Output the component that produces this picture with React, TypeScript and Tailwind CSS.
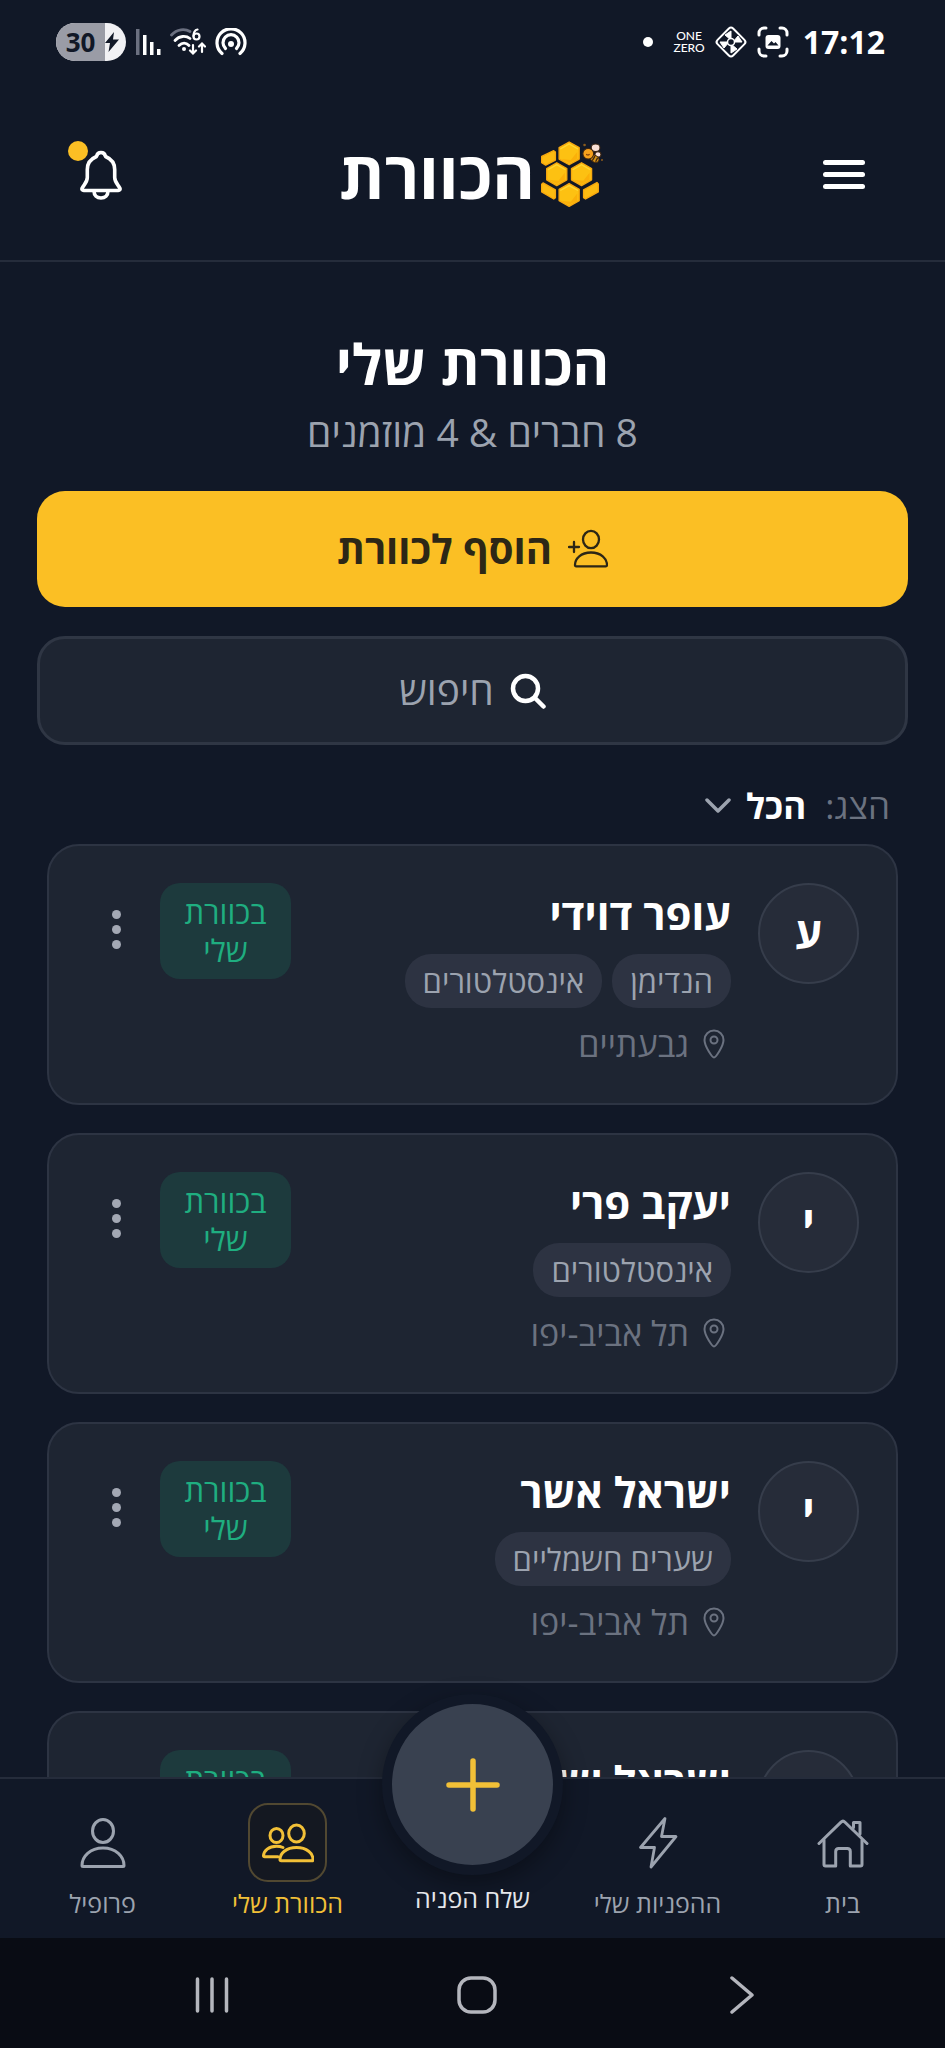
import React from 'react';

type Member = {
  id: number;
  name: string;
  initial: string;
  tags: string[];
  city?: string;
};

const members: Member[] = [
  { id: 1, name: 'עופר דוידי', initial: 'ע', tags: ['הנדימן', 'אינסטלטורים'], city: 'גבעתיים' },
  { id: 2, name: 'יעקב פרי', initial: 'י', tags: ['אינסטלטורים'], city: 'תל אביב-יפו' },
  { id: 3, name: 'ישראל אשר', initial: 'י', tags: ['שערים חשמליים'], city: 'תל אביב-יפו' },
  { id: 4, name: 'ישראל יש', initial: 'י', tags: [] },
];

const Hex = ({ x, y }: { x: number; y: number }) => (
  <g transform={`translate(${x} ${y})`}>
    <path d="M0 -34 L30 -17 V17 L0 34 L-30 17 V-17 Z" fill="#fdc112" stroke="#f7a80f" strokeWidth="4" strokeLinejoin="round" />
    <path d="M-25 -14 L0 -28 L25 -14" fill="none" stroke="#fdd835" strokeWidth="4" strokeLinecap="round" />
    <path d="M-24 17 L0 29 L24 17 V-4 L5 20 Z" fill="#fbb00a" />
  </g>
);

const HiveLogo = () => (
  <svg viewBox="660 38 200 200" className="size-[67px]" aria-hidden="true">
    <Hex x={750} y={78} />
    <Hex x={713} y={140} />
    <Hex x={787} y={140} />
    <Hex x={750} y={202} />
    <g fill="#fdbb11" stroke="#f7a80f" strokeWidth="4" strokeLinejoin="round">
      <path d="M668 87 L704 70 L709 74 V98 L680 113 L668 106 Z" />
      <path d="M672 166 L709 187 V210 L704 214 L668 193 V170 Z" />
      <path d="M793 187 L833 165 L837 169 V193 L799 214 L793 210 Z" />
    </g>
    <g stroke="#3b2412" strokeWidth="3">
      <ellipse cx="829" cy="61" rx="13" ry="11" fill="#f8dfd6" />
      <ellipse cx="836" cy="81" rx="9" ry="8" fill="#f8dfd6" />
      <ellipse cx="826" cy="94" rx="14" ry="10" fill="#d99413" transform="rotate(30 826 94)" />
      <circle cx="807" cy="79" r="16" fill="#f5a01d" />
      <path d="M819 100 L827 86 M829 103 L835 91" strokeWidth="4" />
    </g>
    <path d="M801 80 q5 6 10 0" fill="none" stroke="#7a3b0a" strokeWidth="3" />
    <circle cx="796" cy="53" r="4" fill="#8a5a1c" />
    <circle cx="848" cy="98" r="3" fill="#8a5a1c" />
  </svg>
);

const BellIcon = () => (
  <svg viewBox="0 0 42 50" className="h-[50px] w-[42px]" fill="none" stroke="currentColor" strokeWidth="3.6" strokeLinejoin="round" strokeLinecap="round">
    <path d="M21 2.5c-2.600 0-4 1.500-4.500 4C10.500 9 7.300 13.500 7.300 19.500v8c0 5-3.800 7.500-5.200 10.700-.5 1.300.2 2.300 1.600 2.300h34.600c1.400 0 2.100-1 1.600-2.300-1.400-3.200-5.200-5.700-5.200-10.700v-8c0-6-3.200-10.500-9.200-13-.5-2.500-1.900-4-4.500-4z" />
    <path d="M14 41c0 4.500 3 7 7 7s7-2.500 7-7" />
  </svg>
);

const UserIcon = () => (
  <svg viewBox="0 0 46 50" className="h-[50px] w-[46px]" fill="none" stroke="currentColor" strokeWidth="3" strokeLinejoin="round">
    <ellipse cx="23" cy="13" rx="10.500" ry="11.500" />
    <path d="M2 47.500c0-9 8-17.500 21-17.500s21 8.500 21 17.500c0 .6-.4 1-1 1H3c-.6 0-1-.4-1-1z" />
  </svg>
);

const GroupIcon = () => (
  <svg viewBox="0 0 52 40" className="h-[40px] w-[52px]" fill="none" stroke="currentColor" strokeWidth="3" strokeLinejoin="round" strokeLinecap="round">
    <ellipse cx="34.500" cy="10.500" rx="7.800" ry="8.500" />
    <ellipse cx="14.500" cy="12.500" rx="6.500" ry="7" />
    <path d="M18 36.500c0-6 6-12 16.500-12S51 30.500 51 36.500c0 .8-.4 1.300-1.200 1.300H19.200c-.8 0-1.200-.5-1.200-1.300z" />
    <path d="M21 24.500c-2-.9-4-1.300-6.500-1.300C6.500 23.200 2 28 1.500 32.500c0 .8.4 1.300 1.200 1.300H16" />
  </svg>
);

const BoltIcon = () => (
  <svg viewBox="0 0 40 54" className="h-[54px] w-[40px]" fill="none" stroke="currentColor" strokeWidth="2.800" strokeLinejoin="round">
    <path d="M27 2.500 2.500 31.500h14L13 51 38 20.500H23.500z" />
  </svg>
);

const HomeIcon = () => (
  <svg viewBox="0 0 52 50" className="h-[50px] w-[52px]" fill="none" stroke="currentColor" strokeWidth="3" strokeLinejoin="round" strokeLinecap="round">
    <path d="M2 25.500 24 4.200c1.200-1.200 2.800-1.200 4 0L50 25.500" />
    <path d="M7 22v24.500c0 1 .6 1.500 1.500 1.500h10.200V33.500c0-2 1-3 3-3h8.600c2 0 3 1 3 3V48h10.200c.9 0 1.500-.5 1.500-1.500V22" />
    <path d="M36.500 9.500V4.500h6.500v11.500" />
  </svg>
);

const AddUserIcon = () => (
  <svg viewBox="0 0 40 40" className="size-[40px]" fill="none" stroke="currentColor" strokeWidth="2.300" strokeLinejoin="round" strokeLinecap="round">
    <ellipse cx="23" cy="10.500" rx="8" ry="8.700" />
    <path d="M7 36c0-6.500 6-12.500 16-12.500S39 29.500 39 36c0 .8-.4 1.300-1.200 1.300H8.200C7.400 37.300 7 36.800 7 36z" />
    <path d="M1 18h10M6 13v10" />
  </svg>
);

const PinIcon = () => (
  <svg viewBox="0 0 22 30" className="h-[30px] w-[22px]" fill="none" stroke="currentColor" strokeWidth="2" strokeLinejoin="round">
    <path d="M11 28.500C9.500 28.500 1.500 17.500 1.500 11a9.500 9.500 0 0 1 19 0c0 6.500-8 17.500-9.500 17.500z" />
    <circle cx="11" cy="11" r="3.500" />
  </svg>
);

const StatusBar = () => (
  <div dir="ltr" className="flex h-[84px] items-center justify-between pr-[60px] pl-[56px] text-white">
    <div className="flex items-center">
      <div className="flex h-[38px] w-[70px] items-center overflow-hidden rounded-full bg-[#f1f1f4] text-[#111827]">
        <span className="flex h-full w-[49px] items-center justify-center bg-[#9a9ca6] text-[26px] font-bold">30</span>
        <svg viewBox="0 0 14 20" className="h-[20px] w-[14px]" fill="currentColor">
          <path d="M9 0 0 11h5L3.500 20 14 7.500H8z" />
        </svg>
      </div>
      <svg viewBox="0 0 26 26" className="ml-[10px] h-[26px] w-[26px]" fill="currentColor">
        <rect width="3.500" height="26" fill="#6b7080" />
        <rect x="7" y="6" width="3.500" height="20" />
        <rect x="14" y="13" width="3.500" height="13" />
        <rect x="21" y="20" width="3.500" height="6" />
      </svg>
      <svg viewBox="0 0 36 28" className="ml-[8px] h-[28px] w-[36px]" fill="none" stroke="currentColor" strokeWidth="2.800" strokeLinecap="round">
        <path d="M1.500 7C7 .8 15 .5 20 3.500" stroke="#6b7080" />
        <path d="M5 12.500c4.500-5 11-5 15-2M9 17.500c3.200-3.200 7-3.200 10 0" />
        <circle cx="14" cy="21" r="2" fill="currentColor" stroke="none" />
        <g strokeWidth="2.200">
          <circle cx="26.500" cy="8.500" r="3" />
          <path d="M23.500 8c0-3.500 1.500-6 4-6.500M23 17v8m-3-2.500 3 3 3-3M32 24v-8m-3 2.500 3-3 3 3" />
        </g>
      </svg>
      <svg viewBox="0 0 32 28" className="ml-[9px] h-[28px] w-[32px]" fill="none" stroke="currentColor" strokeWidth="3.200" strokeLinecap="round">
        <path d="M7 25.500a14 14 0 1 1 18 0" />
        <path d="M10.500 20.500a8 8 0 1 1 11 0" />
        <circle cx="16" cy="16" r="3" fill="currentColor" stroke="none" />
      </svg>
    </div>
    <div className="flex items-center">
      <span className="mr-[20px] size-[10px] rounded-full bg-white" />
      <span className="mr-[9px] text-center font-['Lato','Liberation_Sans',sans-serif] text-[12px] leading-[12px] font-medium">
        ONE
        <br />
        ZERO
      </span>
      <svg viewBox="0 0 34 34" className="mr-[9px] size-[34px]" fill="none" stroke="currentColor" strokeWidth="2">
        <rect x="6" y="6" width="22" height="22" rx="3" transform="rotate(45 17 17)" />
        <path d="M17 6v9l-6-5zM17 28v-9l6 5zM6 17h9l-5 6zM28 17h-9l5-6z" fill="currentColor" strokeWidth="1" />
        <circle cx="17" cy="17" r="3.500" fill="#111827" strokeWidth="1.500" />
      </svg>
      <svg viewBox="0 0 32 32" className="mr-[14px] size-[32px]" fill="none" stroke="currentColor" strokeWidth="3" strokeLinecap="round">
        <path d="M2 9V7a5 5 0 0 1 5-5h2M23 2h2a5 5 0 0 1 5 5v2M30 23v2a5 5 0 0 1-5 5h-2M9 30H7a5 5 0 0 1-5-5v-2" />
        <rect x="8.500" y="9" width="15" height="14" rx="3" fill="currentColor" stroke="none" />
        <path d="M10.500 19.500l4-4.500 2.500 2.500 1.500-1.500 3 3.500z" fill="#111827" stroke="none" />
      </svg>
      <span className="text-[32px] font-bold">17:12</span>
    </div>
  </div>
);

const Header = () => (
  <header className="flex h-[178px] shrink-0 items-center justify-between border-b-2 border-[#252c3b] px-[80px] pt-[5px] text-white">
    <button type="button" aria-label="תפריט" className="flex w-[42px] flex-col gap-[7px]">
      <span className="h-[5px] rounded-full bg-white" />
      <span className="h-[5px] rounded-full bg-white" />
      <span className="h-[5px] rounded-full bg-white" />
    </button>
    <div className="flex items-center gap-[4px] pb-[2px]">
      <HiveLogo />
      <span className="text-[65px] leading-[66px] font-bold">הכוורת</span>
    </div>
    <button type="button" aria-label="התראות" className="relative">
      <BellIcon />
      <span className="absolute -top-[9px] -left-[12px] size-[20px] rounded-full bg-[#fbbf24]" />
    </button>
  </header>
);

const MemberCard = ({ member }: { member: Member }) => (
  <article className="flex min-h-[260px] shrink-0 items-start rounded-[32px] border-2 border-[#2d3443] bg-[#1e2532] p-[37px]">
    <div className="flex size-[101px] shrink-0 items-center justify-center rounded-full border-2 border-[#363d4b] bg-[#262c39] text-[43px] font-bold text-white">
      {member.initial}
    </div>
    <div className="mr-[27px] flex-1">
      <h2 className="text-[42px] leading-[62px] font-bold text-white">{member.name}</h2>
      {member.tags.length > 0 && (
        <ul className="mt-[9px] flex gap-[10px]">
          {member.tags.map((tag) => (
            <li key={tag} className="rounded-[26px] bg-[#2d3342] px-[18px] text-[31px] leading-[54px] text-[#9ca3af]">
              {tag}
            </li>
          ))}
        </ul>
      )}
      {member.city && (
        <p className="mt-[14px] flex items-center gap-[14px] pr-[6px] text-[34px] leading-[44px] text-[#6b7280]">
          <PinIcon />
          {member.city}
        </p>
      )}
    </div>
    <span className="w-[131px] rounded-[20px] bg-[#1d3a3d] px-[16px] py-[10px] text-center text-[31px] leading-[38px] text-[#1fae80]">
      בכוורת שלי
    </span>
    <button type="button" aria-label="פעולות נוספות" className="mr-[14px] flex h-[92px] w-[60px] flex-col items-center justify-center gap-[6px]">
      <span className="size-[9px] rounded-full bg-[#a3a8b4]" />
      <span className="size-[9px] rounded-full bg-[#a3a8b4]" />
      <span className="size-[9px] rounded-full bg-[#a3a8b4]" />
    </button>
  </article>
);

const NavItem = ({ label, icon, active }: { label: string; icon: React.ReactNode; active?: boolean }) => (
  <a
    href="#"
    aria-current={active ? 'page' : undefined}
    className={`flex flex-col items-center gap-[3px] text-[25px] leading-[36px] ${active ? 'text-[#f2c037]' : 'text-[#9ca3af]'}`}
  >
    <span className={`flex size-[79px] items-center justify-center rounded-[20px] ${active ? 'border-2 border-[#514831] bg-[#141821]' : ''}`}>
      {icon}
    </span>
    {label}
  </a>
);

const BottomNav = () => (
  <nav className="relative z-10 grid h-[161px] shrink-0 grid-cols-5 border-t-2 border-[#252c3b] bg-[#111827] px-[10px] pt-[24px]">
    <NavItem label="בית" icon={<HomeIcon />} />
    <NavItem label="ההפניות שלי" icon={<BoltIcon />} />
    <button type="button" className="-mt-[109px] flex flex-col items-center gap-[5px] text-[25px] leading-[36px] text-[#e5e7eb]">
      <span className="flex size-[181px] shrink-0 items-center justify-center rounded-full border-10 border-[#111827] bg-[#394150] shadow-[0_8px_24px_rgba(0,0,0,0.35)]">
        <svg viewBox="0 0 54 54" className="size-[54px]" stroke="#f2c037" strokeWidth="5.500" strokeLinecap="round">
          <path d="M27 3v48M3 27h48" />
        </svg>
      </span>
      שלח הפניה
    </button>
    <NavItem label="הכוורת שלי" icon={<GroupIcon />} active />
    <NavItem label="פרופיל" icon={<UserIcon />} />
  </nav>
);

const SystemBar = () => (
  <div dir="ltr" className="flex h-[110px] shrink-0 items-center justify-between bg-[#090c14] px-[191px] pt-[4px] text-[#b4b6bd]">
    <button type="button" aria-label="Recents">
      <svg viewBox="0 0 40 36" className="h-[36px] w-[40px]" stroke="currentColor" strokeWidth="3.500" strokeLinecap="round">
        <path d="M6.500 2v32M21 2v32M35.500 2v32" />
      </svg>
    </button>
    <button type="button" aria-label="Home">
      <svg viewBox="0 0 40 38" className="h-[38px] w-[40px]" fill="none" stroke="currentColor" strokeWidth="3.500">
        <rect x="2" y="2" width="36" height="34" rx="12" />
      </svg>
    </button>
    <button type="button" aria-label="Back">
      <svg viewBox="-8 0 32 38" className="h-[38px] w-[32px]" fill="none" stroke="currentColor" strokeWidth="3.500" strokeLinecap="round" strokeLinejoin="round">
        <path d="M2 2 22 19 2 36" />
      </svg>
    </button>
  </div>
);

const App = () => {
  return (
    <div dir="rtl" className="flex h-screen flex-col bg-[#111827] font-['Open_Sans','Noto_Sans',sans-serif]">
      <StatusBar />
      <Header />

      <main className="min-h-0 flex-1 overflow-hidden pt-[64px]">
        <div className="px-[37px]">
          <h1 className="text-center text-[56px] leading-[74px] font-bold text-white">הכוורת שלי</h1>
          <p className="mt-[4px] text-center text-[39px] leading-[56px] text-[#9ca3af]">8 חברים &amp; 4 מוזמנים</p>

          <button type="button" className="mt-[31px] flex h-[116px] w-full items-center justify-center gap-[16px] rounded-[28px] bg-[#fbbf24] text-[40px] font-bold text-[#2c2716]">
            <AddUserIcon />
            הוסף לכוורת
          </button>

          <label className="mt-[29px] flex h-[109px] items-center justify-center gap-[16px] rounded-[28px] border-3 border-[#2f3644] bg-[#1e2532]">
            <svg viewBox="0 0 36 36" className="size-[36px]" fill="none" stroke="white" strokeWidth="4.500" strokeLinecap="round">
              <circle cx="15.500" cy="15.500" r="12.500" />
              <path d="m25 25 8.500 8.500" />
            </svg>
            <input
              type="search"
              aria-label="חיפוש"
              placeholder="חיפוש"
              className="field-sizing-content bg-transparent text-[39px] text-white outline-none placeholder:text-[#9ca3af]"
            />
          </label>
        </div>

        <div className="mt-[33px] flex items-center px-[55px] text-[35px] leading-[56px]">
          <label htmlFor="filter" className="text-[#6b7280]">הצג:</label>
          <select id="filter" className="mr-[19px] field-sizing-content appearance-none bg-transparent font-bold text-white outline-none">
            <option>הכל</option>
          </select>
          <svg viewBox="0 0 26 16" className="mr-[15px] h-[16px] w-[26px]" fill="none" stroke="#9ca3af" strokeWidth="3.500" strokeLinecap="round" strokeLinejoin="round">
            <path d="m2 2 11 11L24 2" />
          </svg>
        </div>

        <div className="mt-[10px] flex flex-col gap-[28px] px-[47px]">
          {members.map((member) => (
            <MemberCard key={member.id} member={member} />
          ))}
        </div>
      </main>

      <BottomNav />
      <SystemBar />
    </div>
  );
};

export default App;
